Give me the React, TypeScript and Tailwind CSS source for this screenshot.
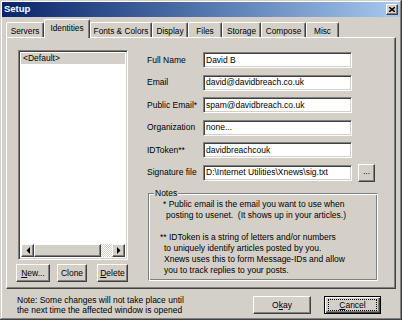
import React from 'react'

const FONT = "font-['Liberation_Sans',Arial,sans-serif]"
const RAISED =
  'border border-t-white border-l-white border-b-[#404040] border-r-[#404040] shadow-[inset_-1px_-1px_0_#808080] bg-[#d4d0c8]'
const SUNKEN =
  'border border-t-[#808080] border-l-[#808080] border-b-white border-r-white shadow-[inset_1px_1px_0_#404040,inset_-1px_-1px_0_#d4d0c8]'

const TABS = [
  { label: 'Servers', w: 'w-[38px]' },
  { label: 'Identities', w: 'w-[46px]', active: true },
  { label: 'Fonts & Colors', w: 'w-[62px]' },
  { label: 'Display', w: 'w-[36px]' },
  { label: 'Files', w: 'w-[34px]' },
  { label: 'Storage', w: 'w-[39px]' },
  { label: 'Compose', w: 'w-[45px]' },
  { label: 'Misc', w: 'w-[33px]' },
]

const FIELDS = [
  { label: 'Full Name', value: 'David B' },
  { label: 'Email', value: 'david@davidbreach.co.uk' },
  { label: 'Public Email*', value: 'spam@davidbreach.co.uk' },
  { label: 'Organization', value: 'none...' },
  { label: 'IDToken**', value: 'davidbreachcouk' },
  { label: 'Signature file', value: 'D:\\Internet Utilities\\Xnews\\sig.txt', browse: true },
]

function Tabs() {
  return (
    <div className="ml-[4px] mt-[3px] flex h-[17px] items-end text-[8.3px]">
      {TABS.map((t) =>
        t.active ? (
          <div
            key={t.label}
            className={`${t.w} relative z-10 -mb-[1px] flex h-[19px] items-start justify-center rounded-t-[2px] border-l border-t border-r border-l-white border-t-white border-r-[#404040] bg-[#d4d0c8] pt-[2px] shadow-[inset_-1px_0_0_#808080]`}
          >
            {t.label}
          </div>
        ) : (
          <div
            key={t.label}
            className={`${t.w} flex h-[15px] items-start justify-center rounded-t-[2px] border-l border-t border-r border-l-white border-t-white border-r-[#404040] pt-[2px] shadow-[inset_-1px_0_0_#808080]`}
          >
            {t.label}
          </div>
        )
      )}
    </div>
  )
}

function Arrow({ dir }: { dir: 'left' | 'right' }) {
  return (
    <div className={`${RAISED} flex h-[13px] w-[13px] shrink-0 items-center justify-center`}>
      <svg width="4" height="7" viewBox="0 0 4 7">
        {dir === 'left' ? <path d="M4 0V7L0.5 3.5Z" fill="#000" /> : <path d="M0 0V7L3.5 3.5Z" fill="#000" />}
      </svg>
    </div>
  )
}

function ListBox() {
  return (
    <div className={`${SUNKEN} ml-[2px] flex h-[210px] w-[110px] flex-col bg-white p-[2px]`}>
      <div className="flex-1">
        <div className="flex h-[11px] items-center bg-[#d4d0c8] pl-[2px] leading-none">&lt;Default&gt;</div>
      </div>
      <div className="flex h-[13px]">
        <Arrow dir="left" />
        <div className={`${RAISED} h-[13px] w-[67px]`} />
        <div className="h-[13px] flex-1 bg-[repeating-conic-gradient(#ffffff_0_25%,#d4d0c8_0_50%)] bg-[length:2px_2px]" />
        <Arrow dir="right" />
      </div>
    </div>
  )
}

function Btn({ children, className = '' }: { children: React.ReactNode; className?: string }) {
  return (
    <div className={`${RAISED} flex h-[18px] items-center justify-center ${className}`}>{children}</div>
  )
}

function Notes() {
  return (
    <div className="relative ml-[1px] mt-[12px] h-[88px] w-[230px] border border-t-[#808080] border-l-[#808080] border-b-white border-r-white shadow-[inset_1px_1px_0_#fff,inset_-1px_-1px_0_#808080]">
      <span className="absolute -top-[6px] left-[5px] bg-[#d4d0c8] px-[1px] leading-[11px]">Notes</span>
      <div className="pt-[5px] leading-[11px]">
        <div className="pl-[14px]">* Public email is the email you want to use when</div>
        <div className="pl-[17px] whitespace-pre">posting to usenet.  (It shows up in your articles.)</div>
        <div className="h-[11px]" />
        <div className="pl-[11px]">** IDToken is a string of letters and/or numbers</div>
        <div className="pl-[15px]">to uniquely identify articles posted by you.</div>
        <div className="pl-[15px]">Xnews uses this to form Message-IDs and allow</div>
        <div className="pl-[15px]">you to track replies to your posts.</div>
      </div>
    </div>
  )
}

export default function App() {
  return (
    <div
      className={`${FONT} flex h-[320px] w-[402px] flex-col bg-[#d4d0c8] p-[2px] text-[8.5px] text-black shadow-[inset_-1px_-1px_0_#404040,inset_1px_1px_0_#d4d0c8,inset_-2px_-2px_0_#808080,inset_2px_2px_0_#fff]`}
    >
      {/* title bar */}
      <div className="flex h-[15px] items-center justify-between bg-gradient-to-r from-[#0a246a] to-[#a6caf0] pl-[2px] pr-[2px]">
        <span className="text-[9.5px] font-bold text-white">Setup</span>
        <div className={`${RAISED} flex h-[11px] w-[12px] items-center justify-center`}>
          <svg width="6" height="5" viewBox="0 0 6 5">
            <path d="M0 0L6 5M6 0L0 5" stroke="#000" strokeWidth="1.4" />
          </svg>
        </div>
      </div>

      <Tabs />

      {/* tab page */}
      <div className="ml-[4px] flex h-[252px] w-[390px] border border-t-white border-l-white border-b-[#404040] border-r-[#404040] shadow-[inset_-1px_-1px_0_#808080]">
        <div className="ml-[9px] mt-[12px] flex w-[112px] flex-col">
          <ListBox />
          <div className="mt-[4px] flex">
            <Btn className="w-[34px]">
              <span><u>N</u>ew...</span>
            </Btn>
            <Btn className="ml-[7px] w-[30px]">Clone</Btn>
            <Btn className="ml-[10px] w-[31px]">
              <span><u>D</u>elete</span>
            </Btn>
          </div>
        </div>

        <div className="ml-[19px] mt-[14px] flex flex-col">
          <div className="flex flex-col gap-[6.5px]">
            {FIELDS.map((f) => (
              <div key={f.label} className="flex h-[16px] items-center">
                <span className="w-[56px] shrink-0">{f.label}</span>
                <div className={`${SUNKEN} flex h-[16px] w-[149px] items-center overflow-hidden whitespace-nowrap bg-white pl-[2px]`}>
                  {f.value}
                </div>
                {f.browse && (
                  <Btn className="ml-[6px] h-[17px] w-[17px]">
                    <span className="-mt-[2px]">...</span>
                  </Btn>
                )}
              </div>
            ))}
          </div>
          <Notes />
        </div>
      </div>

      {/* footer */}
      <div className="flex items-start">
        <div className="ml-[15px] mt-[6px] w-[220px] leading-[10px]">
          <div>Note: Some changes will not take place until</div>
          <div>the next time the affected window is opened</div>
        </div>
        <Btn className="ml-[16px] mt-[7px] w-[58px]">
          <span>O<u>k</u>ay</span>
        </Btn>
        <div className="ml-[13px] mt-[7px] flex h-[18px] w-[57px] items-center justify-center border border-black bg-[#d4d0c8] shadow-[inset_1px_1px_0_#fff,inset_-1px_-1px_0_#404040,inset_-2px_-2px_0_#808080]">
          <div className="flex h-[12px] w-[49px] items-center justify-center border border-dotted border-black">
            <span><u>C</u>ancel</span>
          </div>
        </div>
      </div>
    </div>
  )
}
